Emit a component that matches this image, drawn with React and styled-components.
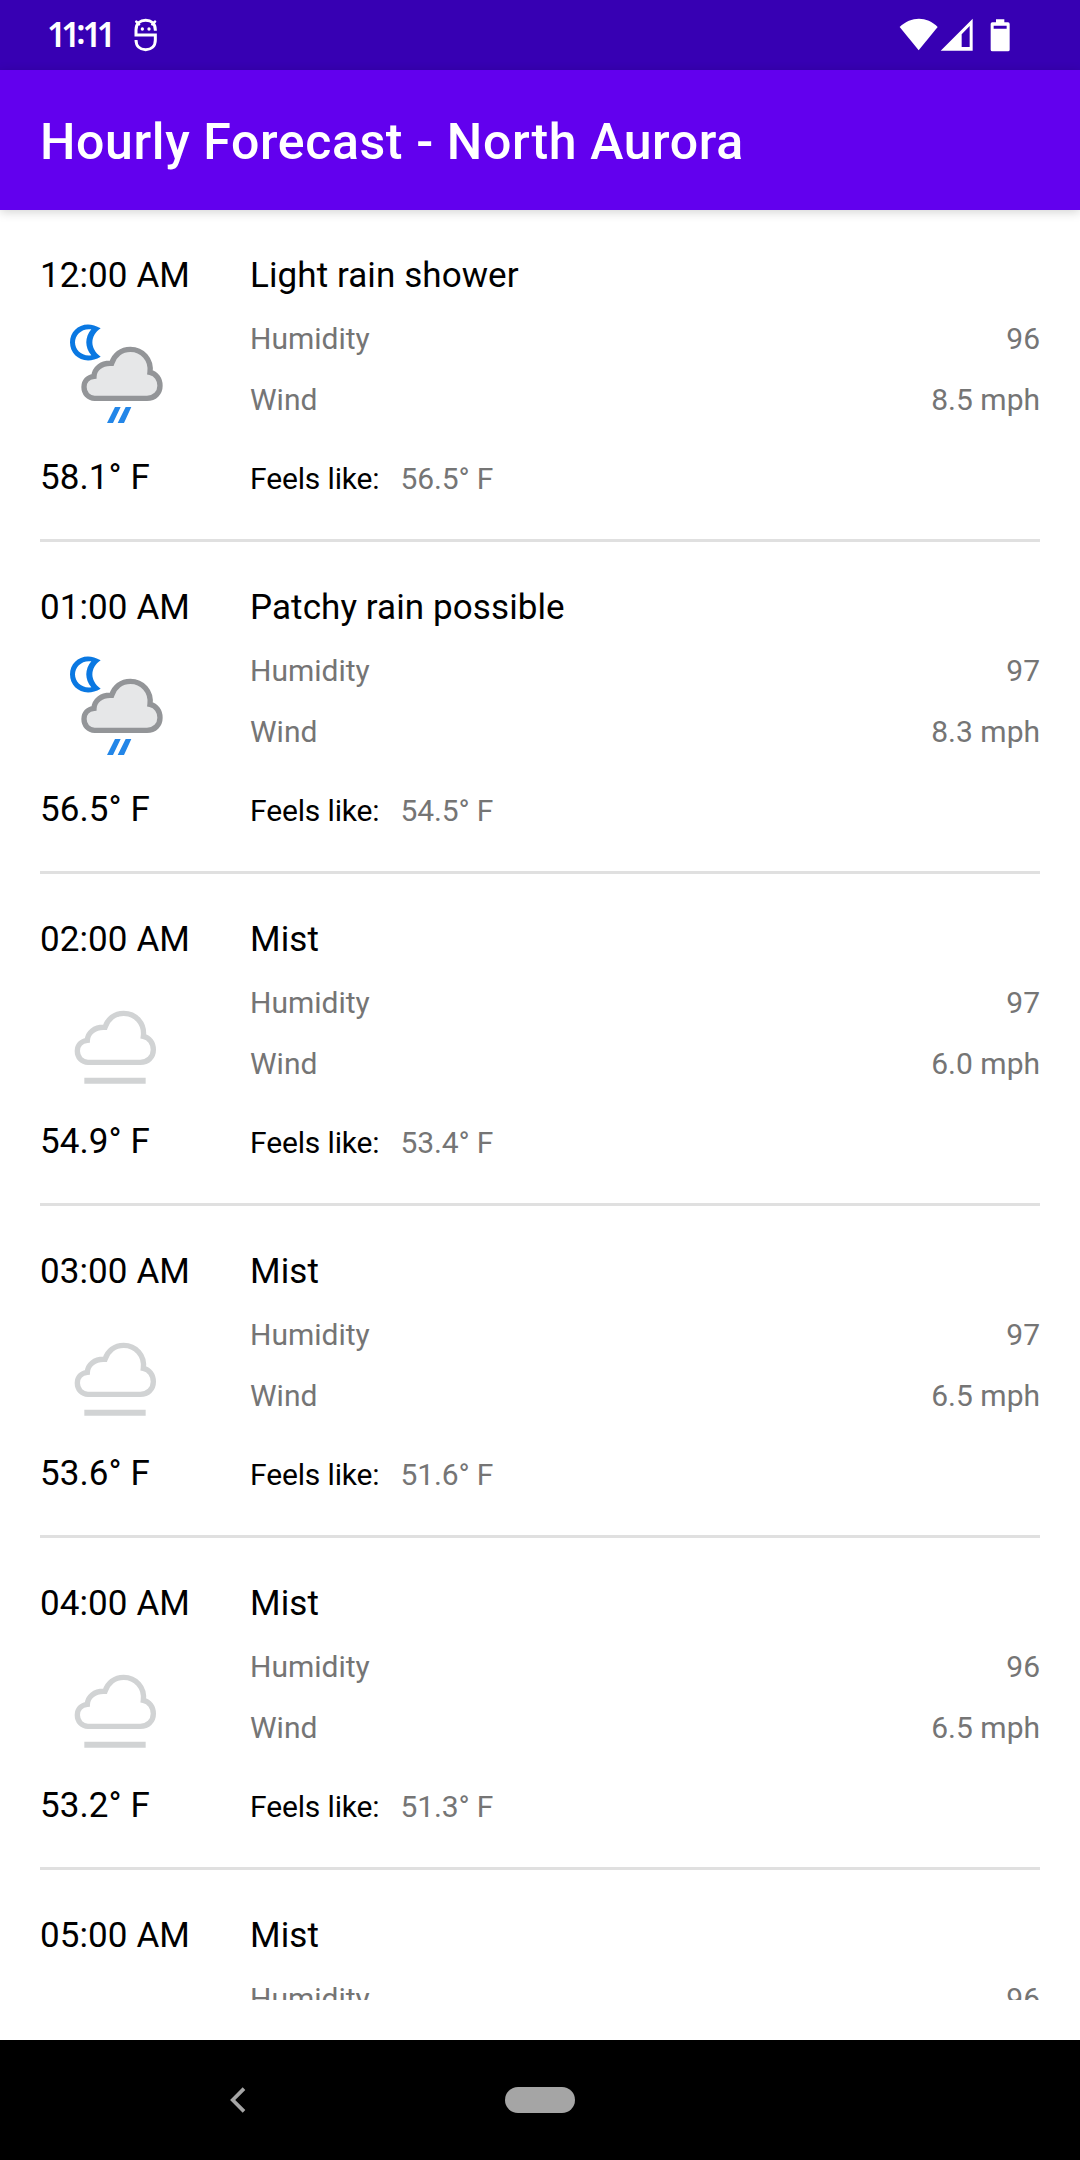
import React from 'react';
import styled, { createGlobalStyle } from 'styled-components';

const GlobalStyle = createGlobalStyle`
  * { box-sizing: border-box; }
  body {
    margin: 0;
    background: #fff;
    font-family: Roboto, 'Noto Sans', sans-serif;
  }
`;

const Screen = styled.div`
  display: flex;
  flex-direction: column;
  width: 1080px;
  height: 2160px;
  overflow: hidden;
  background: #fff;
`;

const StatusBar = styled.header`
  display: flex;
  flex: none;
  align-items: center;
  height: 70px;
  padding: 0 69px 0 47px;
  background: #3700b3;
  color: #fff;
`;

const Clock = styled.div`
  width: 86px;
  height: 70px;
  font: 600 33.5px/68px 'Noto Sans', sans-serif;
  letter-spacing: -5px;
  white-space: nowrap;
`;

const Colon = styled.span`
  margin: 0 2px 0 1px;
  vertical-align: 3px;
  line-height: 1;
`;

const StatusIcons = styled.div`
  display: flex;
  margin-left: auto;
`;

const AppBar = styled.div`
  display: flex;
  flex: none;
  align-items: center;
  height: 140px;
  padding: 4px 40px 0;
  background: #6200ee;
  color: #fff;
  box-shadow: 0 2px 10px rgba(0, 0, 0, 0.18);
  z-index: 1;
`;

const Title = styled.h1`
  margin: 0;
  font-size: 50px;
  font-weight: 500;
  line-height: 60px;
  letter-spacing: 0.62px;
  white-space: nowrap;
`;

const List = styled.main`
  flex: none;
  height: 1790px;
  margin-bottom: 40px;
  padding: 0 40px;
  overflow: hidden;
`;

const HourRow = styled.article`
  display: grid;
  grid-template-columns: 210px 1fr;
  height: 332px;
  padding-top: 45px;
  border-bottom: 3px solid #e0e0e0;
`;

const Column = styled.div`
  display: flex;
  flex-direction: column;
`;

const Primary = styled.div`
  height: 42px;
  font-size: 35px;
  line-height: 42px;
  letter-spacing: 0.09px;
  color: #000;
  white-space: nowrap;
`;

const IconBox = styled.div`
  height: 150px;
  margin: 3px 0 7px;
`;

const Detail = styled.div`
  display: flex;
  justify-content: space-between;
  height: 36px;
  margin-top: ${(p) => p.$gap}px;
  font-size: 30px;
  line-height: 36px;
  letter-spacing: 0;
  color: #757575;
  white-space: nowrap;
`;

const FeelsLike = styled(Detail)`
  justify-content: flex-start;
  gap: 21px;
  letter-spacing: -0.14px;
`;

const Label = styled.span`
  color: #000;
`;

const NavBar = styled.nav`
  display: grid;
  flex: none;
  grid-template-columns: 226px 1fr 226px;
  align-items: center;
  height: 120px;
  padding: 0 20px;
  background: #000;
`;

const BackSlot = styled.div`
  display: flex;
  justify-content: flex-end;
`;

const HomePill = styled.div`
  justify-self: center;
  width: 70px;
  height: 26px;
  border-radius: 13px;
  background: #a5a5a5;
`;

const CLOUD =
  'M224 475 C205 475 192 460 192 441 C192 424 203 411 222 409 C223 387 243 368 275 370 C283 345 304 328 331 328 C367 328 395 358 390 397 C409 401 420 418 420 437 C420 459 404 475 381 475 Z';

function WeatherIcon({ kind }) {
  return (
    <svg width="150" height="150" viewBox="60 180 450 450" fill="none">
      {kind === 'rain' ? (
        <>
          <path
            d="M242 265 C195 236 150 265 150 307 C150 350 195 378 242 350 C209 326 209 288 242 265Z M214 268 C194 292 194 322 214 346 C185 350 165 330 165 307 C165 285 185 264 214 268Z"
            fill="#0a78e2"
            fillRule="evenodd"
          />
          <path d={CLOUD} fill="#e6e7e8" stroke="#939598" strokeWidth="16" />
          <path
            d="M285 501H302L279 549H261ZM317 501H334L312 549H293Z"
            fill="#2386e8"
          />
        </>
      ) : (
        <>
          <path d={CLOUD} transform="translate(-20 0)" stroke="#d1d3d4" strokeWidth="16" />
          <path d="M193 530H377" stroke="#d1d3d4" strokeWidth="18" />
        </>
      )}
    </svg>
  );
}

function DebugIcon() {
  return (
    <svg width="26" height="34" viewBox="398 54 78 102" fill="none" stroke="#fff">
      <path
        d="M465 92V90C465 70 452 61 436 61C420 61 407 70 407 90V105H465V120C465 139 452 149 436 149C420 149 407 139 407 120"
        strokeWidth="9"
      />
      <path d="M408 65L416 73M464 65L456 73" strokeWidth="8" strokeLinecap="round" />
      <circle cx="426" cy="87" r="5" fill="#fff" stroke="none" />
      <circle cx="446" cy="87" r="5" fill="#fff" stroke="none" />
    </svg>
  );
}

function SystemIcons() {
  return (
    <svg width="112" height="34" viewBox="118 52 336 102" fill="#fff">
      <path d="M120 79C154 46 202 46 234 79L177 149Z" />
      <path
        fillRule="evenodd"
        d="M339 54V150H243ZM330 76L306 101V139H330Z"
      />
      <path
        fillRule="evenodd"
        d="M409 56H434V65H445Q450 65 450 70V147Q450 152 445 152H398Q393 152 393 147V70Q393 65 398 65H409ZM402 75V84H441V75Z"
      />
    </svg>
  );
}

function BackIcon() {
  return (
    <svg width="16" height="26" viewBox="0 0 48 78" fill="none">
      <path d="M42 5L8 39L42 73" stroke="#a5a5a5" strokeWidth="11" />
    </svg>
  );
}

const HOURS = [
  { time: '12:00 AM', text: 'Light rain shower', icon: 'rain', humidity: 96, wind: '8.5', temp: '58.1', feels: '56.5' },
  { time: '01:00 AM', text: 'Patchy rain possible', icon: 'rain', humidity: 97, wind: '8.3', temp: '56.5', feels: '54.5' },
  { time: '02:00 AM', text: 'Mist', icon: 'mist', humidity: 97, wind: '6.0', temp: '54.9', feels: '53.4' },
  { time: '03:00 AM', text: 'Mist', icon: 'mist', humidity: 97, wind: '6.5', temp: '53.6', feels: '51.6' },
  { time: '04:00 AM', text: 'Mist', icon: 'mist', humidity: 96, wind: '6.5', temp: '53.2', feels: '51.3' },
  { time: '05:00 AM', text: 'Mist', humidity: 96 },
];

function Hour({ data }) {
  return (
    <HourRow>
      <Column>
        <Primary>{data.time}</Primary>
        {data.icon && (
          <IconBox>
            <WeatherIcon kind={data.icon} />
          </IconBox>
        )}
        {data.temp && <Primary>{data.temp}° F</Primary>}
      </Column>
      <Column>
        <Primary>{data.text}</Primary>
        <Detail $gap={24}>
          <span>Humidity</span>
          <span>{data.humidity}</span>
        </Detail>
        {data.wind && (
          <Detail $gap={25}>
            <span>Wind</span>
            <span>{data.wind} mph</span>
          </Detail>
        )}
        {data.feels && (
          <FeelsLike $gap={43}>
            <Label>Feels like:</Label>
            <span>{data.feels}° F</span>
          </FeelsLike>
        )}
      </Column>
    </HourRow>
  );
}

export default function App() {
  return (
    <Screen>
      <GlobalStyle />
      <StatusBar>
        <Clock>
          11<Colon>:</Colon>11
        </Clock>
        <DebugIcon />
        <StatusIcons>
          <SystemIcons />
        </StatusIcons>
      </StatusBar>
      <AppBar>
        <Title>Hourly Forecast - North Aurora</Title>
      </AppBar>
      <List>
        {HOURS.map((hour) => (
          <Hour key={hour.time} data={hour} />
        ))}
      </List>
      <NavBar>
        <BackSlot>
          <BackIcon />
        </BackSlot>
        <HomePill />
      </NavBar>
    </Screen>
  );
}
